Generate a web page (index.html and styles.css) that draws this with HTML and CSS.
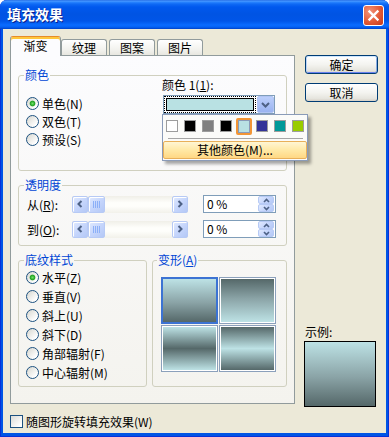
FILE: index.html
```html
<!DOCTYPE html>
<html lang="zh-CN">
<head>
    <meta charset="UTF-8">
    <meta name="viewport" content="width=device-width, initial-scale=1.0">
    <title>填充效果</title>
    <link rel="stylesheet" href="styles.css">
</head>
<body>
<div class="window">
    <div class="titlebar">
        <span class="title">填充效果</span>
        <span class="close-btn">
            <svg width="19" height="19" viewBox="0 0 19 19"><path d="M5.5 5.5 L13.5 13.5 M13.5 5.5 L5.5 13.5" stroke="#fff" stroke-width="2.4" stroke-linecap="square"/></svg>
        </span>
    </div>

    <div class="dialog">
        <div class="main">
            <div class="tabs">
                <div class="tab active">渐变</div>
                <div class="tab">纹理</div>
                <div class="tab">图案</div>
                <div class="tab">图片</div>
            </div>

            <div class="panel">
                <fieldset class="group group-color">
                    <legend>颜色</legend>
                    <div class="color-wrap">
                        <div class="radios">
                            <div class="radio-row"><span class="radio checked"></span>单色(N)</div>
                            <div class="radio-row"><span class="radio"></span>双色(T)</div>
                            <div class="radio-row"><span class="radio"></span>预设(S)</div>
                        </div>
                        <div class="picker">
                            <div class="picker-label">颜色 1(<u>1</u>):</div>
                            <div class="combo">
                                <div class="combo-field"><div class="combo-color"></div></div>
                                <div class="combo-btn">
                                    <svg width="9" height="6" viewBox="0 0 9 6"><path d="M1 1 L4.5 4.5 L8 1" fill="none" stroke="#4D6185" stroke-width="2"/></svg>
                                </div>
                                <div class="popup">
                                    <div class="swatches">
                                        <span class="cell"><span class="sw" style="background:#ffffff"></span></span>
                                        <span class="cell"><span class="sw" style="background:#000000"></span></span>
                                        <span class="cell"><span class="sw" style="background:#808080"></span></span>
                                        <span class="cell"><span class="sw" style="background:#000000"></span></span>
                                        <span class="cell"><span class="sw selected" style="background:#b9e1e3"></span></span>
                                        <span class="cell"><span class="sw" style="background:#333399"></span></span>
                                        <span class="cell"><span class="sw" style="background:#009999"></span></span>
                                        <span class="cell"><span class="sw" style="background:#99cc00"></span></span>
                                    </div>
                                    <div class="sep"></div>
                                    <div class="more-btn">其他颜色(M)...</div>
                                </div>
                            </div>
                        </div>
                    </div>
                </fieldset>

                <fieldset class="group group-trans">
                    <legend>透明度</legend>
                    <div class="trans-row">
                        <span class="trans-label">从(<u>R</u>):</span>
                        <div class="scrollbar">
                            <span class="sb-btn"><svg width="6" height="8" viewBox="0 0 6 8"><path d="M4.5 1 L1.5 4 L4.5 7" fill="none" stroke="#4D6185" stroke-width="2"/></svg></span>
                            <span class="sb-btn sb-thumb"><svg width="8" height="7" viewBox="0 0 8 7"><path d="M0.5 0V7M2.5 0V7M4.5 0V7M6.5 0V7" stroke="#8CB0F8"/></svg></span>
                            <span class="sb-track"></span>
                            <span class="sb-btn"><svg width="6" height="8" viewBox="0 0 6 8"><path d="M1.5 1 L4.5 4 L1.5 7" fill="none" stroke="#4D6185" stroke-width="2"/></svg></span>
                        </div>
                        <div class="spin">
                            <span class="spin-text">0 %</span>
                            <span class="spin-btns">
                                <span class="spin-btn"><svg width="7" height="5" viewBox="0 0 7 5"><path d="M1 4 L3.5 1.5 L6 4" fill="none" stroke="#4D6185" stroke-width="1.6"/></svg></span>
                                <span class="spin-btn"><svg width="7" height="5" viewBox="0 0 7 5"><path d="M1 1 L3.5 3.5 L6 1" fill="none" stroke="#4D6185" stroke-width="1.6"/></svg></span>
                            </span>
                        </div>
                    </div>
                    <div class="trans-row">
                        <span class="trans-label">到(<u>O</u>):</span>
                        <div class="scrollbar">
                            <span class="sb-btn"><svg width="6" height="8" viewBox="0 0 6 8"><path d="M4.5 1 L1.5 4 L4.5 7" fill="none" stroke="#4D6185" stroke-width="2"/></svg></span>
                            <span class="sb-btn sb-thumb"><svg width="8" height="7" viewBox="0 0 8 7"><path d="M0.5 0V7M2.5 0V7M4.5 0V7M6.5 0V7" stroke="#8CB0F8"/></svg></span>
                            <span class="sb-track"></span>
                            <span class="sb-btn"><svg width="6" height="8" viewBox="0 0 6 8"><path d="M1.5 1 L4.5 4 L1.5 7" fill="none" stroke="#4D6185" stroke-width="2"/></svg></span>
                        </div>
                        <div class="spin">
                            <span class="spin-text">0 %</span>
                            <span class="spin-btns">
                                <span class="spin-btn"><svg width="7" height="5" viewBox="0 0 7 5"><path d="M1 4 L3.5 1.5 L6 4" fill="none" stroke="#4D6185" stroke-width="1.6"/></svg></span>
                                <span class="spin-btn"><svg width="7" height="5" viewBox="0 0 7 5"><path d="M1 1 L3.5 3.5 L6 1" fill="none" stroke="#4D6185" stroke-width="1.6"/></svg></span>
                            </span>
                        </div>
                    </div>
                </fieldset>

                <div class="bottom-groups">
                    <fieldset class="group group-style">
                        <legend>底纹样式</legend>
                        <div class="radio-row tall"><span class="radio checked"></span>水平(Z)</div>
                        <div class="radio-row tall"><span class="radio"></span>垂直(V)</div>
                        <div class="radio-row tall"><span class="radio"></span>斜上(U)</div>
                        <div class="radio-row tall"><span class="radio"></span>斜下(D)</div>
                        <div class="radio-row tall"><span class="radio"></span>角部辐射(F)</div>
                        <div class="radio-row tall"><span class="radio"></span>中心辐射(M)</div>
                    </fieldset>
                    <fieldset class="group group-variant">
                        <legend>变形(<u>A</u>)</legend>
                        <div class="thumbs">
                            <div class="thumb selected"><div class="fill grad-down"></div></div>
                            <div class="thumb"><div class="fill grad-up"></div></div>
                            <div class="thumb"><div class="fill grad-mid-dark"></div></div>
                            <div class="thumb"><div class="fill grad-mid-light"></div></div>
                        </div>
                    </fieldset>
                </div>
            </div>

            <div class="check-row"><span class="checkbox"></span>随图形旋转填充效果(W)</div>
        </div>

        <div class="side">
            <div class="btn default">确定</div>
            <div class="btn">取消</div>
            <div class="preview-label">示例:</div>
            <div class="preview grad-down"></div>
        </div>
    </div>
</div>
</body>
</html>
```

FILE: styles.css
```css
* {
    box-sizing: border-box;
}
body {
    margin: 0;
    background: #ffffff;
    font-family: "Noto Sans CJK SC", "Noto Sans", sans-serif;
    font-size: 12px;
    color: #000;
}
u {
    text-decoration: underline;
}
.window {
    width: 389px;
    height: 437px;
    display: flex;
    flex-direction: column;
    background: #0055e5;
    border-radius: 7px 7px 0 0;
    overflow: hidden;
    box-shadow: inset 1px 0 #0831d9, inset -1px 0 #0831d9, inset 0 -1px #0831d9;
}
.titlebar {
    height: 29px;
    flex: none;
    display: flex;
    align-items: center;
    justify-content: space-between;
    padding: 0 5px 0 7px;
    background: linear-gradient(#1660e0 0px, #4e9bff 1px, #2a86ff 2px, #0f6af5 4px, #0058ee 7px, #0054e3 14px, #0055e8 21px, #0a6bff 25px, #0462f5 27px, #0041c8 29px);
}
.title {
    color: #fff;
    font-weight: bold;
    font-size: 14px;
    letter-spacing: 0;
    text-shadow: 1px 1px #0a1e8c;
    padding-bottom: 1px;
}
.close-btn {
    width: 21px;
    height: 21px;
    border: 1px solid #fff;
    border-radius: 3px;
    display: flex;
    align-items: center;
    justify-content: center;
    background: radial-gradient(circle at 30% 30%, #f1937a 0, #e35a36 55%, #c5391b 100%);
    margin-top: 1px;
}
.dialog {
    flex: 1;
    margin: 0 3px 4px 3px;
    background: #ece9d8;
    padding: 7px 0 0 7px;
    display: flex;
    gap: 10px;
}
.main {
    width: 285px;
}
.tabs {
    display: flex;
    align-items: flex-end;
    height: 19px;
    position: relative;
    z-index: 1;
}
.tab {
    width: 46px;
    height: 16px;
    margin-left: 2px;
    border: 1px solid #919b9c;
    border-bottom: none;
    border-radius: 3px 3px 0 0;
    background: linear-gradient(#ffffff, #f3f3ef 60%, #e8e7e0);
    text-align: center;
    line-height: 15px;
}
.tab.active {
    width: 51px;
    height: 20px;
    margin: 0 0 -1px 0;
    background: #fcfcfe;
    border-top-color: #e68b2c;
    box-shadow: inset 0 2px 0 #ffc73c;
    line-height: 18px;
}
.tab.active + .tab {
    margin-left: 0;
}
.panel {
    border: 1px solid #919b9c;
    background: linear-gradient(#fcfcfe, #f4f3ee);
    padding: 12px 7px 16px 7px;
}
.group {
    margin: 0;
    border: 1px solid #d0d0bf;
    border-radius: 3px;
    padding: 0 7px;
    min-width: 0;
}
.group legend {
    color: #0046d5;
    padding: 0 1px;
    margin-left: -2px;
    line-height: 14px;
    font-size: 12px;
}
.group-color {
    padding-bottom: 22px;
}
.color-wrap {
    display: flex;
}
.radios {
    width: 136px;
    padding-top: 12px;
}
.radio-row {
    display: flex;
    align-items: center;
    height: 18px;
    white-space: nowrap;
}
.radio-row.tall {
    height: 19px;
}
.radio {
    width: 13px;
    height: 13px;
    flex: none;
    border-radius: 50%;
    border: 1px solid #1c5180;
    background: linear-gradient(135deg, #d6d6cf, #ffffff 80%);
    margin-right: 3px;
}
.radio.checked {
    background: radial-gradient(circle, #6fe06a 0, #21a121 2.4px, rgba(33, 161, 33, 0) 3.3px), linear-gradient(135deg, #d6d6cf, #ffffff 80%);
}
.picker {
    margin-top: -4px;
}
.picker-label {
    line-height: 14px;
}
.combo {
    position: relative;
    width: 112px;
    height: 19px;
    margin: 3px 0 0 1px;
    border: 1px solid #7f9db9;
    background: #fff;
    display: flex;
    gap: 1px;
}
.combo-field {
    width: 93px;
    border: 1px dotted #000;
    padding: 1px;
}
.combo-color {
    height: 100%;
    border: 1px solid #000;
    background: #b9e1e3;
}
.combo-btn {
    width: 17px;
    border: 1px solid #b1c4f3;
    border-radius: 2px;
    background: linear-gradient(#bccffb, #9ab3f1);
    display: flex;
    align-items: center;
    justify-content: center;
}
.popup {
    position: absolute;
    left: -2px;
    top: 18px;
    width: 146px;
    border: 1px solid #8a9bb8;
    background: #fbfbf9;
    box-shadow: 3px 3px 3px rgba(0, 0, 0, 0.35);
    padding-bottom: 1px;
    z-index: 5;
}
.swatches {
    display: flex;
    margin-top: 2px;
    height: 18px;
}
.cell {
    width: 18px;
    height: 18px;
    display: flex;
    align-items: center;
    justify-content: center;
}
.sw {
    width: 12px;
    height: 12px;
    border: 1px solid #9d9d9d;
}
.sw.selected {
    width: 16px;
    height: 17px;
    border: 2px solid #f29536;
    border-radius: 2px;
    box-shadow: inset 0 0 0 1px #8a9bb8;
}
.sep {
    height: 1px;
    margin: 3px 4px 0 5px;
    background: #a6a6a6;
}
.more-btn {
    height: 18px;
    margin-top: 2px;
    border: 1px solid #e8b05a;
    border-radius: 2px;
    background: linear-gradient(#fff6d4, #ffe9a6 50%, #ffd884);
    text-align: center;
    line-height: 16px;
}
.group-trans {
    margin-top: 7px;
    padding-top: 3px;
    padding-bottom: 7px;
}
.trans-row {
    display: flex;
    align-items: center;
    height: 18px;
}
.trans-row + .trans-row {
    margin-top: 7px;
}
.trans-label {
    width: 46px;
    padding-left: 1px;
    white-space: nowrap;
}
.scrollbar {
    width: 116px;
    height: 17px;
    display: flex;
    background: linear-gradient(#f0efe8, #fefefb 40%, #fefefb 60%, #f2f1ea);
}
.sb-btn {
    width: 16px;
    flex: none;
    border: 1px solid #b7caf5;
    border-radius: 2px;
    background: linear-gradient(135deg, #e1eafe, #c6d6fc 50%, #b4c8f6);
    box-shadow: inset 1px 1px #fff;
    display: flex;
    align-items: center;
    justify-content: center;
}
.sb-thumb {
    width: 17px;
}
.sb-track {
    flex: 1;
}
.spin {
    width: 73px;
    height: 18px;
    margin-left: 15px;
    border: 1px solid #7f9db9;
    background: #fff;
    display: flex;
}
.spin-text {
    flex: 1;
    padding-left: 3px;
    line-height: 16px;
}
.spin-btns {
    width: 17px;
    display: flex;
    flex-direction: column;
    padding: 0 1px 0 0;
}
.spin-btn {
    flex: 1;
    border: 1px solid #b7caf5;
    border-radius: 2px;
    background: linear-gradient(135deg, #e1eafe, #c6d6fc 50%, #b4c8f6);
    display: flex;
    align-items: center;
    justify-content: center;
}
.bottom-groups {
    display: flex;
    gap: 5px;
    margin-top: 7px;
}
.group-style {
    width: 129px;
    padding-top: 1px;
    padding-bottom: 4px;
}
.group-variant {
    flex: 1;
    padding: 10px 8px 14px 8px;
}
.group-variant legend {
    margin-left: -4px;
}
.thumbs {
    display: grid;
    grid-template-columns: 57px 57px;
    grid-auto-rows: 47px;
    gap: 1px;
}
.thumb {
    border: 1px solid #8ba0bb;
    padding: 1px;
    background: #fff;
}
.thumb.selected {
    border: 2px solid #3c73d3;
    padding: 0;
}
.fill {
    height: 100%;
}
.grad-down {
    background: linear-gradient(#bde2e5, #8aa3a6 55%, #556869);
}
.grad-up {
    background: linear-gradient(#556869, #8aa3a6 45%, #bde2e5);
}
.grad-mid-dark {
    background: linear-gradient(#bde2e5, #556869 50%, #bde2e5);
}
.grad-mid-light {
    background: linear-gradient(#556869, #bde2e5 50%, #556869);
}
.check-row {
    display: flex;
    align-items: center;
    height: 13px;
    margin-top: 11px;
    white-space: nowrap;
}
.checkbox {
    width: 13px;
    height: 13px;
    flex: none;
    border: 1px solid #1c5180;
    background: linear-gradient(135deg, #dcdcd7, #ffffff 85%);
    margin-right: 3px;
}
.side {
    width: 73px;
    padding-top: 19px;
}
.btn {
    height: 19px;
    border: 1px solid #003c74;
    border-radius: 3px;
    background: linear-gradient(#ffffff, #f4f4f0 50%, #e6e5de 85%, #d6d0c5);
    text-align: center;
    line-height: 17px;
}
.btn + .btn {
    margin-top: 9px;
}
.btn.default {
    box-shadow: inset 0 1px #cee7ff, inset 1px 0 #bcd4f6, inset -1px 0 #89ade4, inset 0 -1px #6982ee;
}
.preview-label {
    margin-top: 223px;
    line-height: 14px;
}
.preview {
    width: 72px;
    height: 66px;
    margin: 2px 0 0 -1px;
    border: 1px solid #000;
}
```
